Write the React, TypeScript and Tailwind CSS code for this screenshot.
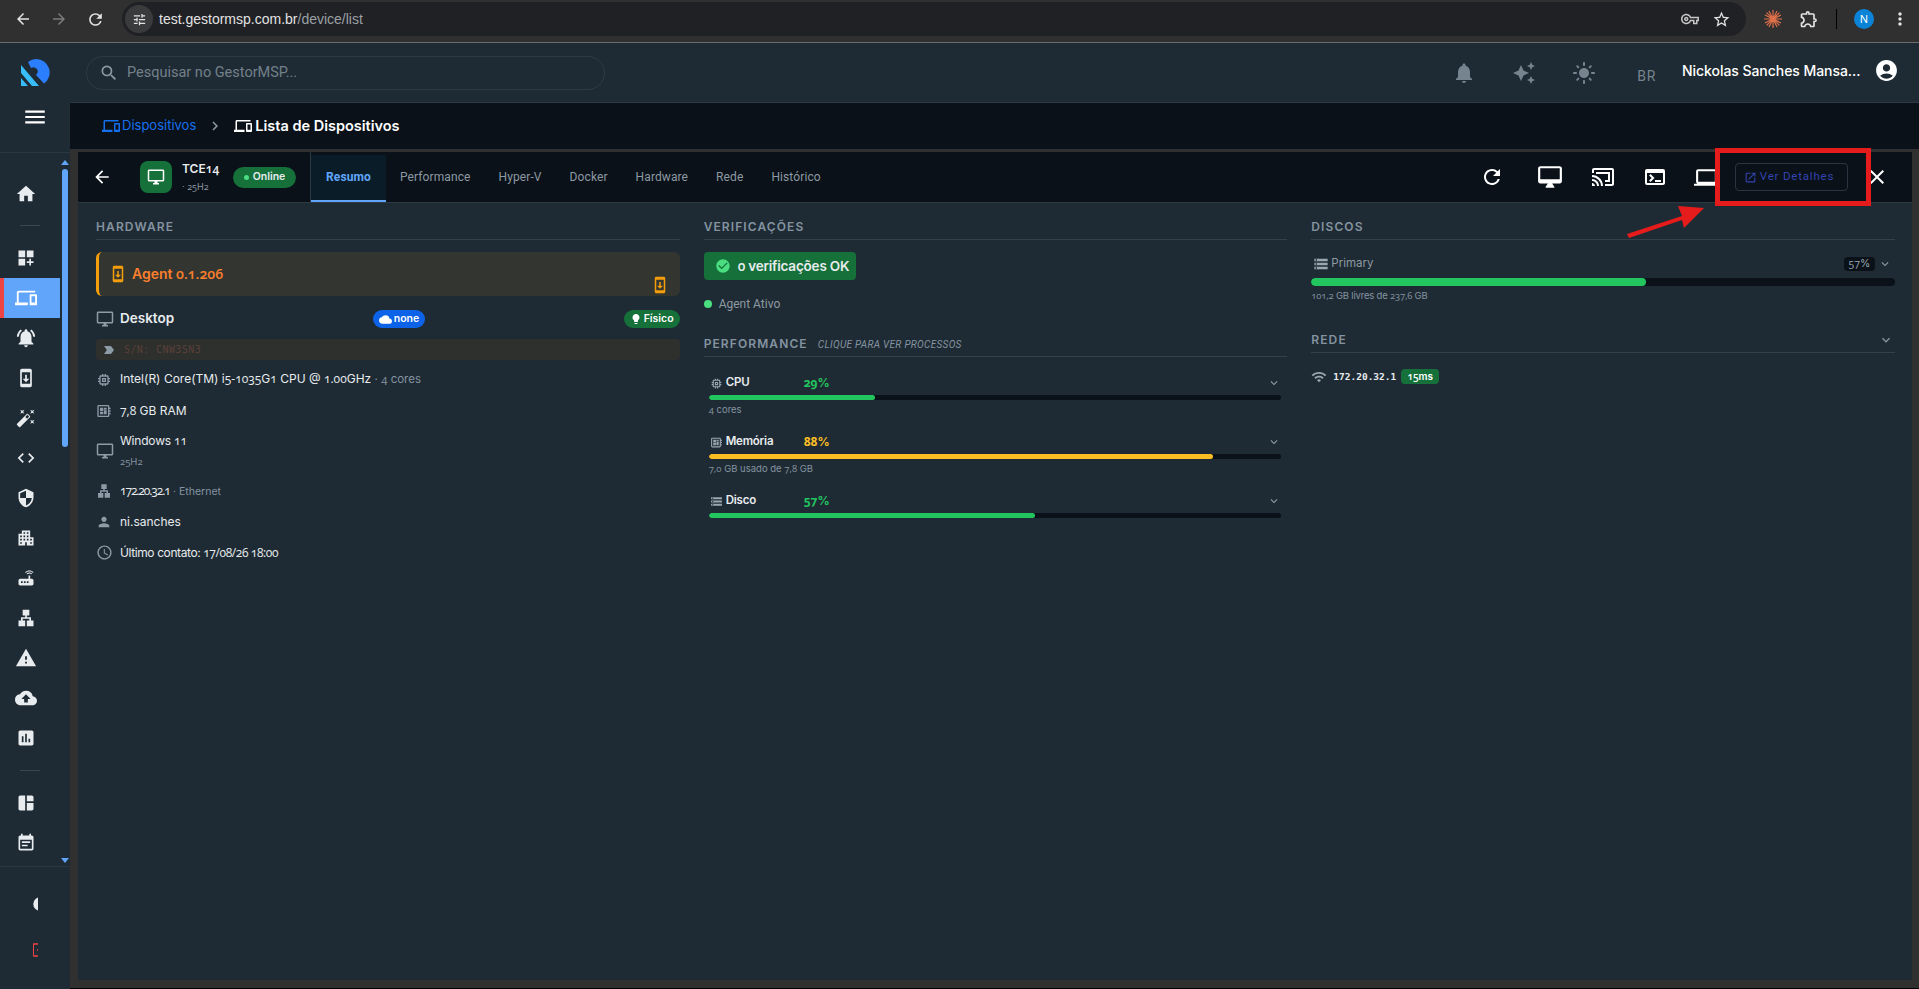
import type { ReactNode } from 'react';
import {
  MdAccountCircle, MdArrowBack, MdArrowForward, MdAssessment, MdAutoAwesome, MdAutoFixHigh, MdCheckCircle,
  MdChevronRight, MdClose, MdCloud, MdCloudUpload, MdCode, MdDashboardCustomize, MdDevices, MdEventNote,
  MdExpandMore, MdHome, MdLabelImportant, MdLan, MdLightMode, MdLightbulb, MdMemory, MdMenu, MdMoreVert, MdNotifications,
  MdNotificationsActive, MdOpenInNew, MdOutlineAccessTime, MdOutlineCastConnected, MdOutlineDesktopMac, MdOutlineDesktopWindows,
  MdOutlineDeveloperBoard, MdOutlineExtension, MdOutlineLaptop, MdOutlineTerminal, MdOutlineTune, MdOutlineVpnKey,
  MdPerson, MdRefresh, MdRouter, MdSearch, MdSecurity, MdSpaceDashboard, MdApartment, MdStarBorder, MdStorage,
  MdSystemUpdate, MdWarning, MdWifi, MdLogout, MdDarkMode,
} from 'react-icons/md';

const disp = 'font-["Inter",sans-serif]';
const rob = 'font-["Roboto",sans-serif]';

// digitos old-style, a fonte original usa numerais de texto
function Old({ children }: { children: ReactNode }) {
  return <span className="font-['Open_Sans',sans-serif] [font-feature-settings:'onum']">{children}</span>;
}

function SideIcon({ children, active }: { children: ReactNode; active?: boolean }) {
  return (
    <div className={`relative h-10 flex items-center pl-[16px] text-[#e8ecef] ${active ? 'bg-[#60a5fa] text-white' : ''}`}>
      {active && <div className="absolute left-0 top-0 bottom-0 w-1 bg-[#ef4444]" />}
      {children}
    </div>
  );
}

function Sidebar() {
  return (
    <aside className="w-[70px] shrink-0 bg-[#1f2b34] flex flex-col">
      <div className="h-[110px] border-b border-[#2b3740] flex flex-col items-center pt-[16px]">
        <svg width="30" height="28" viewBox="0 0 30 28">
          <path d="M8 3 Q12 0 16 0 A13.5 13.5 0 0 1 24 24.5 L16 16 Q19 13 17 10 Q14 7 11 9 Z" fill="#2b7fff" />
          <path d="M1 6 L19 27 L12 27 L1 14 Z" fill="#38bdf8" />
          <path d="M1 19 L8 27 L1 27 Z" fill="#38bdf8" />
        </svg>
        <MdMenu size={26} className="text-white mt-[17px]" />
      </div>
      <div className="flex h-[713px]">
        <div className="w-[60px] pt-[19px]">
          <SideIcon><MdHome size={22} className="-ml-px mt-1" /></SideIcon>
          <div className="h-[26px] flex items-center"><div className="ml-5 w-5 h-px bg-[#3a4650]" /></div>
          <SideIcon><MdDashboardCustomize size={20} /></SideIcon>
          <SideIcon active><MdDevices size={22} className="-ml-px" /></SideIcon>
          <SideIcon><MdNotificationsActive size={22} className="-ml-px" /></SideIcon>
          <SideIcon><MdSystemUpdate size={20} /></SideIcon>
          <SideIcon><MdAutoFixHigh size={20} /></SideIcon>
          <SideIcon><MdCode size={20} /></SideIcon>
          <SideIcon><MdSecurity size={20} /></SideIcon>
          <SideIcon><MdApartment size={20} /></SideIcon>
          <SideIcon><MdRouter size={20} /></SideIcon>
          <SideIcon><MdLan size={20} /></SideIcon>
          <SideIcon><MdWarning size={22} className="-ml-px" /></SideIcon>
          <SideIcon><MdCloudUpload size={22} className="-ml-px" /></SideIcon>
          <SideIcon><MdAssessment size={20} /></SideIcon>
          <div className="h-[25px] flex items-center"><div className="ml-5 w-5 h-px bg-[#3a4650]" /></div>
          <SideIcon><MdSpaceDashboard size={20} /></SideIcon>
          <SideIcon><MdEventNote size={20} /></SideIcon>
        </div>
        <div className="w-[10px] flex flex-col items-center">
          <div className="h-3 mt-[3px] flex items-center -ml-[1px]">
            <div className="w-0 h-0 border-x-[4px] border-x-transparent border-b-[5px] border-b-[#60a5fa]" />
          </div>
          <div className="w-[6px] h-[278px] bg-[#60a5fa] rounded-t-full rounded-b-full -ml-[1px] mt-[1px]" />
          <div className="flex-1" />
          <div className="h-3 flex items-center -ml-[1px]">
            <div className="w-0 h-0 border-x-[4px] border-x-transparent border-t-[5px] border-t-[#60a5fa]" />
          </div>
        </div>
      </div>
      <div className="border-t border-[#2b3740] flex-1 pl-[33px] pt-[28px] flex flex-col gap-[28px]">
        <div className="w-[5px] h-[18px] overflow-hidden text-[#e8ecef]"><MdDarkMode size={18} className="-ml-[2px]" /></div>
        <div className="w-[5px] h-[18px] overflow-hidden text-[#ef4444]"><MdLogout size={18} className="-ml-[2px]" /></div>
      </div>
    </aside>
  );
}

function BrowserBar() {
  return (
    <div className="h-[43px] shrink-0 bg-[#303030] border-b border-[#6b6b6b] flex items-center text-[#e3e3e3] relative">
      <MdArrowBack size={18} className="ml-[14px] -mt-1" />
      <MdArrowForward size={18} className="ml-[18px] text-[#7b7b7b] -mt-1" />
      <MdRefresh size={19} className="ml-[18px] -mt-1" />
      <div className="ml-[17px] w-[1624px] h-[34px] mt-[-4px] rounded-full bg-[#202124] flex items-center pl-[3px]">
        <div className="w-[28px] h-[28px] rounded-full bg-[#3a3b3d] flex items-center justify-center"><MdOutlineTune size={15} /></div>
        <span className={`ml-[6px] text-[14px] font-["Liberation_Sans",sans-serif]`}>test.gestormsp.com.br<span className="text-[#9aa0a6]">/device/list</span></span>
        <div className="flex-1" />
        <MdOutlineVpnKey size={18} className="text-[#c7c7c7] mr-[13px]" />
        <MdStarBorder size={19} className="mr-[15px]" />
      </div>
      <svg width="18" height="18" viewBox="0 0 18 18" className="ml-[18px] -mt-1" stroke="#e0704a" strokeWidth="1.2">
        <path d="M9 0v18M0 9h18M2.6 2.6l12.8 12.8M15.4 2.6L2.6 15.4M5 1l8 16M13 1L5 17M1 5l16 8M17 5L1 13" />
      </svg>
      <MdOutlineExtension size={20} className="ml-[17px] -mt-1" />
      <div className="ml-[17px] w-px h-[20px] bg-black -mt-1" />
      <div className="ml-[17px] w-5 h-5 rounded-full bg-[#0b84d8] text-white text-[11px] flex items-center justify-center -mt-1">N</div>
      <MdMoreVert size={20} className="ml-[16px] -mt-1" />
    </div>
  );
}

function TopBar() {
  return (
    <div className="h-[60px] shrink-0 bg-[#1f2b34] border-b border-[#2d3942] flex items-center">
      <div className="ml-[16px] w-[519px] h-[34px] rounded-full border border-[#2e3b44] flex items-center pl-[12px]">
        <MdSearch size={20} className="text-[#8d99a3]" />
        <span className={`ml-[8px] text-[14.5px] text-[#73808a] ${rob}`}>Pesquisar no GestorMSP...</span>
      </div>
      <div className="flex-1" />
      <MdNotifications size={24} className="text-[#76848f] mr-[36px]" />
      <MdAutoAwesome size={24} className="text-[#76848f] mr-[36px]" />
      <MdLightMode size={24} className="text-[#76848f] mr-[41px]" />
      <span className={`text-[14px] text-[#76848f] tracking-wider mt-2 mr-[26px] ${rob}`}>BR</span>
      <span className={`w-[187px] -mt-1 text-[14px] font-medium tracking-[-0.05px] text-white truncate ${disp}`}>Nickolas Sanches Mansa...</span>
      <MdAccountCircle size={25} className="text-white ml-[5px] mr-[20px] -mt-1" />
    </div>
  );
}

function Breadcrumb() {
  return (
    <div className="h-[46px] shrink-0 bg-[#0a1118] flex items-center pl-[32px]">
      <MdDevices size={18} className="text-[#1570ef]" />
      <span className={`ml-[2px] text-[13px] text-[#1570ef] ${disp}`}>Dispositivos</span>
      <MdChevronRight size={18} className="ml-[10px] text-[#8d99a3]" />
      <MdDevices size={18} className="ml-[10px] text-white" />
      <span className={`ml-[3px] text-[14.5px] font-semibold text-white ${disp}`}>Lista de Dispositivos</span>
    </div>
  );
}

function PanelHeader() {
  const tabs = ['Performance', 'Hyper-V', 'Docker', 'Hardware', 'Rede', 'Histórico'];
  return (
    <div className="relative h-[51px] shrink-0 bg-[#0a1118] border-b border-[#2d3942] flex items-center">
      <MdArrowBack size={20} className="text-white ml-[14px]" />
      <div className="ml-[28px] w-8 h-8 rounded-lg bg-[#15703a] flex items-center justify-center text-white">
        <MdOutlineDesktopWindows size={18} />
      </div>
      <div className="ml-[10px] w-[51px]">
        <div className={`text-[12px] leading-4 font-semibold text-[#e8ecef] ${disp}`}>TCE<Old>14</Old></div>
        <div className={`text-[9px] leading-3 mt-1 text-[#8d99a3] ${disp}`}>· <Old>25</Old>H<Old>2</Old></div>
      </div>
      <div className={`w-[63px] h-[21px] rounded-full bg-[#15703a] text-[#e8ecef] flex items-center justify-center gap-1 text-[10.5px] font-semibold ${disp}`}>
        <span className="w-[5px] h-[5px] rounded-full bg-[#4ade80]" />Online
      </div>
      <div className="ml-[14px] w-px h-full bg-[#2d3942]" />
      <div className={`self-stretch flex items-end text-[12px] tracking-[0.1px] ${rob}`}>
        <div className="h-[47px] w-[75px] pb-[1px] bg-[#0a1c28] border-b-2 border-[#60a5fa] text-[#60a5fa] font-bold flex items-center justify-center">Resumo</div>
        {tabs.map(t => (
          <div key={t} className="h-[47px] px-[14px] pb-[4px] text-[#8d99a3] flex items-center">{t}</div>
        ))}
      </div>
      <div className="flex-1" />
      <MdRefresh size={24} className="text-white" />
      <MdOutlineDesktopMac size={26} className="text-white ml-[33px]" />
      <MdOutlineCastConnected size={24} className="text-white ml-[28px]" />
      <MdOutlineTerminal size={24} className="text-white ml-[28px]" />
      <MdOutlineLaptop size={25} className="text-white ml-[27px]" />
      <div className={`ml-[16px] w-[113px] h-[28px] pr-[5px] rounded border border-[#2b3542] flex items-center justify-center gap-[3px] text-[11.5px] tracking-[0.8px] text-[#3344b0] ${rob}`}>
        <MdOpenInNew size={13} />Ver Detalhes
      </div>
      <MdClose size={24} className="text-white ml-[17px] mr-[23px]" />
    </div>
  );
}

function SectionTitle({ children, chevron }: { children: ReactNode; chevron?: boolean }) {
  return (
    <div className={`h-[21px] border-b border-[#34414b] flex items-start justify-between text-[12px] leading-[16px] font-semibold tracking-[1.1px] text-[#8493a0] ${disp}`}>
      <div>{children}</div>
      {chevron && <MdExpandMore size={16} className="mr-[1px]" />}
    </div>
  );
}

function InfoRow({ icon, children, h = 31 }: { icon: ReactNode; children: ReactNode; h?: number }) {
  return (
    <div className="flex items-center" style={{ height: h }}>
      <div className="w-6 text-[#8d9ba7] flex items-center">{icon}</div>
      <div className={`text-[12px] text-[#e8ecef] ${disp}`}>{children}</div>
    </div>
  );
}

function Hardware() {
  return (
    <div>
      <SectionTitle>HARDWARE</SectionTitle>
      <div className="relative mt-3 h-11 bg-[#333630] rounded-md border-l-[3px] border-[#f59e0b] flex items-center pl-[10px]">
        <MdSystemUpdate size={18} className="text-[#f59e0b] -mt-[1px]" />
        <span className={`ml-[5px] -mt-[2px] text-[14px] font-semibold text-[#f97f2e] ${disp}`}>Agent <Old>0.1.206</Old></span>
        <MdSystemUpdate size={18} className="absolute right-[11px] bottom-[2px] text-[#f59e0b]" />
      </div>
      <div className="mt-[14px] h-[18px] flex items-center justify-between">
        <div className="w-[277px] flex items-center">
          <MdOutlineDesktopWindows size={18} className="text-[#8d9ba7]" />
          <span className={`ml-[6px] -mt-[1px] text-[13.5px] font-semibold text-[#e8ecef] ${disp}`}>Desktop</span>
        </div>
        <div className={`h-[18px] w-[52px] rounded-full bg-[#0d63e8] text-white text-[10.5px] font-semibold flex items-center justify-center gap-[2px] ${disp}`}>
          <MdCloud size={13} />none
        </div>
        <div className="flex-1" />
        <div className={`h-[18px] w-[56px] rounded-full bg-[#15703a] text-white text-[10.5px] font-semibold flex items-center justify-center gap-[2px] ${disp}`}>
          <MdLightbulb size={12} />Físico
        </div>
      </div>
      <div className="mt-[11px] h-[21px] bg-[#2e302e] rounded flex items-center pl-[6px]">
        <MdLabelImportant size={14} className="text-[#8d9ba7]" />
        <span className="ml-[8px] text-[10px] tracking-[0.4px] text-[#5a3f38] font-['DejaVu_Sans_Mono',monospace]">S/N: CNW3SN3</span>
      </div>
      <div className="mt-[4px]">
        <InfoRow icon={<MdMemory size={16} />}>Intel(R) Core(TM) i<Old>5-1035</Old>G<Old>1</Old> CPU @ <Old>1.00</Old>GHz <span className="text-[#8493a0] text-[11.5px]">· <Old>4</Old> cores</span></InfoRow>
        <InfoRow icon={<MdOutlineDeveloperBoard size={16} />}><Old>7,8</Old> GB RAM</InfoRow>
        <div className="h-[6px]" />
        <InfoRow icon={<MdOutlineDesktopWindows size={18} />} h={38}>
          <div className="tracking-[-0.2px]">Windows <Old>11</Old></div>
          <div className="text-[#8493a0] text-[9.5px] mt-[5px]"><Old>25</Old>H<Old>2</Old></div>
        </InfoRow>
        <div className="h-[5px]" />
        <InfoRow icon={<MdLan size={16} />}><span className="tracking-[-1.1px]"><Old>172.20.32.1</Old></span> <span className="text-[#8493a0] text-[10.5px]">· Ethernet</span></InfoRow>
        <InfoRow icon={<MdPerson size={16} />}>ni.sanches</InfoRow>
        <InfoRow icon={<MdOutlineAccessTime size={17} />}><span className="tracking-[-0.4px]">Último contato: <Old>17/08/26 18:00</Old></span></InfoRow>
      </div>
    </div>
  );
}

function Meter({ icon, name, pct, color, bar, sub }: { icon: ReactNode; name: string; pct: number; color: string; bar: string; sub?: ReactNode }) {
  return (
    <div className="h-[59px] pl-[5px] pr-[6px]">
      <div className="h-[18px] flex items-center">
        <div className="w-[17px] pl-[1px] text-[#9aa7b2]">{icon}</div>
        <span className={`w-[78px] text-[11.5px] tracking-[-0.2px] font-semibold text-[#e8ecef] ${disp}`}>{name}</span>
        <span className={`text-[12px] font-bold ${color} ${disp}`}><Old>{pct}</Old>%</span>
        <div className="flex-1" />
        <MdExpandMore size={14} className="text-[#8d99a3]" />
      </div>
      <div className="mt-[3px] h-[5px] rounded-full bg-[#0a1118] overflow-hidden">
        <div className={`h-full rounded-full ${bar}`} style={{ width: `${pct}%` }} />
      </div>
      {sub && <div className={`mt-[3px] text-[9.5px] text-[#8493a0] ${disp}`}>{sub}</div>}
    </div>
  );
}

function Checks() {
  return (
    <div>
      <SectionTitle>VERIFICAÇÕES</SectionTitle>
      <div className={`mt-3 w-[152px] h-7 rounded bg-[#15703a] flex items-center pl-[11px] text-[13.5px] font-semibold tracking-[-0.2px] text-[#e8ecef] ${disp}`}>
        <MdCheckCircle size={16} className="text-[#4ade80] shrink-0" /><span className="ml-[7px] whitespace-nowrap"><Old>0</Old> verificações OK</span>
      </div>
      <div className={`mt-[16px] h-4 flex items-center text-[12px] text-[#8d99a3] ${rob}`}>
        <span className="w-2 h-2 rounded-full bg-[#4ade80] mr-[7px]" />Agent Ativo
      </div>
      <div className="mt-[24px]">
        <SectionTitle>
          PERFORMANCE <span className={`ml-[6px] italic font-normal text-[10px] tracking-[0.3px] ${rob}`}>CLIQUE PARA VER PROCESSOS</span>
        </SectionTitle>
      </div>
      <div className="mt-[17px]">
        <Meter icon={<MdMemory size={13} />} name="CPU" pct={29} color="text-[#22c55e]" bar="bg-[#22c55e]" sub={<><Old>4</Old> cores</>} />
        <Meter icon={<MdOutlineDeveloperBoard size={13} />} name="Memória" pct={88} color="text-[#fbbf24]" bar="bg-[#fbbf24]" sub={<><Old>7,0</Old> GB usado de <Old>7,8</Old> GB</>} />
        <Meter icon={<MdStorage size={13} />} name="Disco" pct={57} color="text-[#22c55e]" bar="bg-[#22c55e]" />
      </div>
    </div>
  );
}

function Disks() {
  return (
    <div>
      <SectionTitle>DISCOS</SectionTitle>
      <div className="mt-[17px] h-[14px] flex items-center">
        <MdStorage size={16} className="ml-[2px] text-[#9aa7b2]" />
        <span className={`ml-[2px] text-[11.5px] text-[#8d99a3] ${disp}`}>Primary</span>
        <div className="flex-1" />
        <span className={`w-[31px] h-[14px] rounded-sm bg-[#0a1118] text-[#9aa7b2] text-[10.5px] flex items-center justify-center ${disp}`}><Old>57</Old>%</span>
        <MdExpandMore size={14} className="ml-[3px] mr-[3px] text-[#8d99a3]" />
      </div>
      <div className="mt-[7px] h-2 rounded-full bg-[#0a1118] overflow-hidden">
        <div className="h-full rounded-full bg-[#22c55e]" style={{ width: '57.4%' }} />
      </div>
      <div className={`mt-[3px] text-[9.5px] text-[#8493a0] tracking-[-0.2px] ${disp}`}><Old>101,2</Old> GB livres de <Old>237,6</Old> GB</div>
      <div className="mt-[29px]"><SectionTitle chevron>REDE</SectionTitle></div>
      <div className="mt-[16px] h-[15px] flex items-center">
        <MdWifi size={16} className="text-[#9aa7b2]" />
        <span className="ml-[6px] text-[9.5px] font-bold text-[#e8ecef] font-['DejaVu_Sans_Mono',monospace]">172.20.32.1</span>
        <span className={`ml-[5px] w-[38px] h-[15px] rounded-sm bg-[#15703a] text-[10px] font-semibold text-white flex items-center justify-center ${disp}`}><Old>15</Old>ms</span>
      </div>
    </div>
  );
}

export default function App() {
  return (
    <div className="relative h-[989px] w-[1919px] overflow-hidden bg-[#303030] flex flex-col">
      <BrowserBar />
      <div className="flex flex-1 min-h-0">
        <Sidebar />
        <div className="flex-1 flex flex-col min-w-0">
          <TopBar />
          <Breadcrumb />
          <div className="flex-1 flex flex-col pl-2 pt-[3px] pr-[7px] pb-2 border-b border-black">
            <PanelHeader />
            <div className="flex-1 bg-[#1f2b34] pl-[18px] pr-[17px] pt-[16px] grid grid-cols-3 gap-6 content-start">
              <Hardware />
              <Checks />
              <Disks />
            </div>
          </div>
        </div>
      </div>
      {/* anotação do print */}
      <div className="absolute left-[1715px] top-[148px] w-[156px] h-[58px] border-[5px] border-[#e61c1c]" />
      <svg className="absolute left-[1620px] top-[200px]" width="90" height="40" viewBox="0 0 90 40">
        <path d="M7 34 L62 16 L58 6 L84 8 L64 28 L62 20 L9 38 Z" fill="#e61c1c" />
      </svg>
    </div>
  );
}
